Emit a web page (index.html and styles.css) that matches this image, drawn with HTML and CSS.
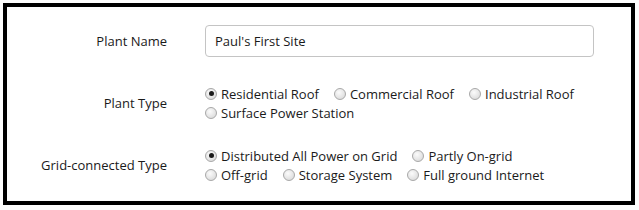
FILE: index.html
```html
<!DOCTYPE html>
<html lang="en">
<head>
    <meta charset="UTF-8">
    <meta name="viewport" content="width=device-width, initial-scale=1.0">
    <title>Plant Settings</title>
    <link rel="stylesheet" href="styles.css">
</head>
<body>
    <div class="panel">
        <div class="form-row row-name">
            <label class="row-label" for="plantName">Plant Name</label>
            <input type="text" id="plantName" class="text-input" value="Paul's First Site">
        </div>
        <div class="form-row row-type">
            <span class="row-label">Plant Type</span>
            <div class="radio-group">
                <div class="radio-line">
                    <label class="radio checked"><span class="dot"></span>Residential Roof</label>
                    <label class="radio"><span class="dot"></span>Commercial Roof</label>
                    <label class="radio"><span class="dot"></span>Industrial Roof</label>
                </div>
                <div class="radio-line">
                    <label class="radio"><span class="dot"></span>Surface Power Station</label>
                </div>
            </div>
        </div>
        <div class="form-row row-grid">
            <span class="row-label">Grid-connected Type</span>
            <div class="radio-group">
                <div class="radio-line">
                    <label class="radio checked"><span class="dot"></span>Distributed All Power on Grid</label>
                    <label class="radio"><span class="dot"></span>Partly On-grid</label>
                </div>
                <div class="radio-line">
                    <label class="radio"><span class="dot"></span>Off-grid</label>
                    <label class="radio"><span class="dot"></span>Storage System</label>
                    <label class="radio"><span class="dot"></span>Full ground Internet</label>
                </div>
            </div>
        </div>
    </div>
</body>
</html>
```

FILE: styles.css
```css
body {
    margin: 0;
    background: #fff;
    font-family: "Open Sans", "Noto Sans", sans-serif;
    font-size: 13px;
    color: #1a1a1a;
}

.panel {
    box-sizing: border-box;
    width: 632px;
    height: 202px;
    margin: 3px 0 0 3px;
    border: 4px solid #000;
    padding: 18px 37px 0 0;
}

.form-row {
    display: flex;
    align-items: center;
}

.row-label {
    width: 160px;
    margin-right: 38px;
    text-align: right;
    flex-shrink: 0;
}

.text-input {
    flex: 1;
    box-sizing: border-box;
    height: 32px;
    padding: 0 9px;
    border: 1px solid #c4c4c4;
    border-radius: 4px;
    font-family: inherit;
    font-size: 13px;
    color: #1a1a1a;
    outline: none;
}

.row-type {
    margin-top: 27px;
}

.row-grid {
    margin-top: 24px;
}

.radio-group {
    display: flex;
    flex-direction: column;
}

.radio-line {
    display: flex;
    height: 19px;
    align-items: center;
}

.radio {
    display: flex;
    align-items: center;
    margin-right: 15px;
    white-space: nowrap;
}

.dot {
    box-sizing: border-box;
    width: 12px;
    height: 12px;
    margin-right: 4px;
    border: 1px solid #a8a8a8;
    border-radius: 50%;
    background: radial-gradient(circle at 40% 35%, #fbfbfb, #d4d4d4);
    position: relative;
}

.radio.checked .dot::after {
    content: "";
    position: absolute;
    left: 2.5px;
    top: 2.5px;
    width: 5px;
    height: 5px;
    border-radius: 50%;
    background: #1a1a1a;
}
```
